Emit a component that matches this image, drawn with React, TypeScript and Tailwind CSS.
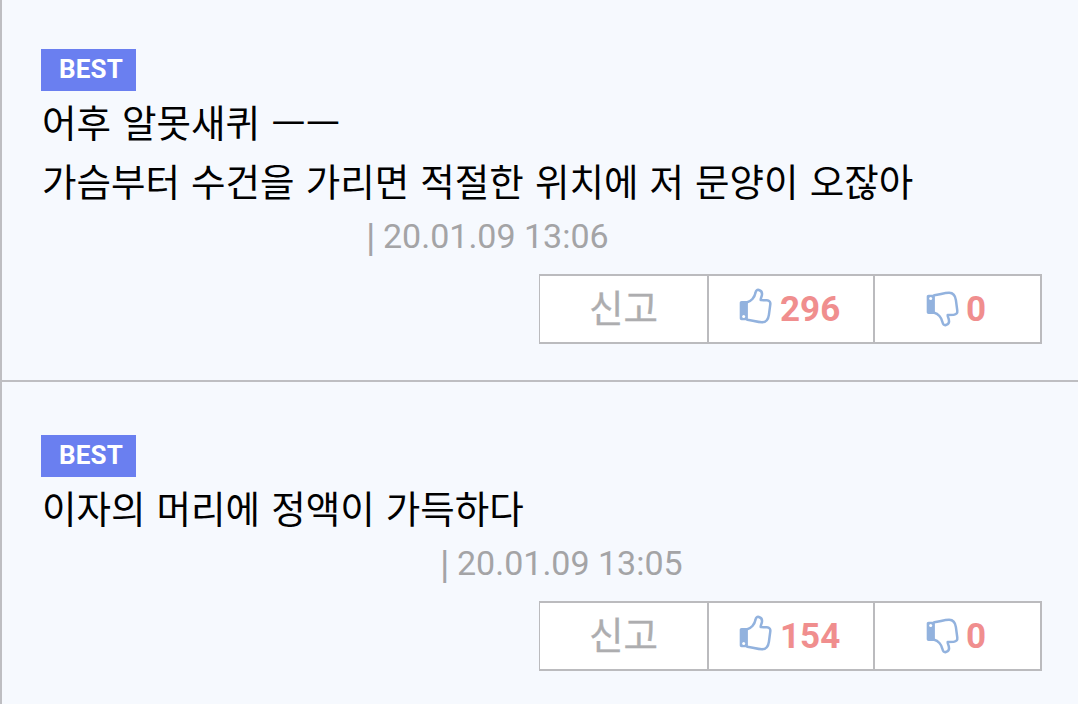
interface Comment {
  id: number;
  lines: string[];
  date: string;
  likes: number;
  dislikes: number;
}

const comments: Comment[] = [
  {
    id: 1,
    lines: ['어후 알못새퀴 ㅡㅡ', '가슴부터 수건을 가리면 적절한 위치에 저 문양이 오잖아'],
    date: '20.01.09 13:06',
    likes: 296,
    dislikes: 0,
  },
  { id: 2, lines: ['이자의 머리에 정액이 가득하다'], date: '20.01.09 13:05', likes: 154, dislikes: 0 },
];

function ThumbIcon({ className }: { className: string }) {
  return (
    <svg viewBox="0 0 33 36" className={`h-9 w-[33px] shrink-0 text-[#92b2de] ${className}`} fill="none">
      <path
        d="M8.2 14.2C12 13.4 15.6 9.6 16.5 4.8C16.8 2.6 18.1 1.5 19.9 2C22.6 2.7 23.4 5.1 22.8 7.6C22.3 9.5 21.5 10.6 21.7 12.1L27.8 12.3C30.4 12.5 31.6 13.9 31.3 16.3L29.9 26.8C29.2 31.8 27.2 34.1 23.2 34.2C17.8 34.3 13.8 32.2 8.2 31.8"
        stroke="currentColor"
        strokeWidth="2.5"
        strokeLinecap="round"
        strokeLinejoin="round"
      />
      <path
        d="M2.6 13H8.9V32.2H2.6C1.4 32.2.7 31.5.7 30.3V14.9C.7 13.7 1.4 13 2.6 13Z"
        fill="currentColor"
      />
      <circle cx="4.7" cy="28.6" r="1.5" fill="white" />
    </svg>
  );
}

export default function App() {
  return (
    <main className="h-[704px] w-[1078px] overflow-hidden border-l-2 border-[#bebec2] bg-[#f6f9fe] font-['Roboto','Noto_Sans_CJK_KR',sans-serif]">
      {comments.map((comment, i) => (
        <article key={comment.id} className={i === 0 ? 'h-[382px] border-b-2 border-[#bebec2] pt-[49px] pl-[39px]' : 'pt-[53px] pl-[39px]'}>
          <div className="flex h-[42px] w-[95px] items-center bg-[#6a7ff0] pb-0.5 pl-[18px] text-[26px] leading-none font-bold tracking-[0.2px] text-white">
            BEST
          </div>
          <div className="pt-1 pl-px text-[37.5px] leading-[59px] [word-spacing:1.8px] whitespace-nowrap text-black">
            {comment.lines.map((line) => (
              <p key={line}>{line}</p>
            ))}
          </div>
          <p className={`flex h-[61px] text-[34px] leading-[46px] text-[#a4a4a6] ${i === 0 ? 'pl-[325px]' : 'pl-[399px]'}`}>
            <span className="w-[17px] pt-0.5 text-[38.5px]">|</span>
            {comment.date}
          </p>
          <div className="ml-[498px] flex h-[70px] w-[503px] border-2 border-l border-[#bbbbbe] bg-white">
            <button className="w-[167px] pt-0.5 text-[37.5px] leading-none text-[#adadaf] [-webkit-text-stroke:0.3px_#adadaf]">신고</button>
            <button className="flex w-[166px] items-center border-l-2 border-[#bbbbbe] pl-[30px] text-[35px] leading-none font-bold text-[#f08e8e]">
              <ThumbIcon className="mr-[8px] -mt-[6px]" />
              {comment.likes}
            </button>
            <button className="flex flex-1 items-center border-l-2 border-[#bbbbbe] pl-[51px] text-[35px] leading-none font-bold text-[#f08e8e]">
              <ThumbIcon className="mr-[7px] -scale-y-100" />
              {comment.dislikes}
            </button>
          </div>
        </article>
      ))}
    </main>
  );
}
